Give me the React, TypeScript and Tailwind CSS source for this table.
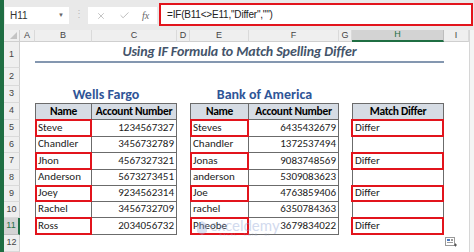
import { X, Check } from "lucide-react";

const COL = ["col-start-1", "col-start-2", "col-start-3", "col-start-4", "col-start-5", "col-start-6", "col-start-7", "col-start-8", "col-start-9", "col-start-10"];
const ROW = ["row-start-1", "row-start-2", "row-start-3", "row-start-4", "row-start-5", "row-start-6", "row-start-7", "row-start-8", "row-start-9", "row-start-10", "row-start-11", "row-start-12", "row-start-13"];

const wells = [
  ["Steve", "1234567327"],
  ["Chandler", "3456732789"],
  ["Jhon", "4567327321"],
  ["Anderson", "5673273451"],
  ["Joey", "9234562314"],
  ["Rachel", "3456732709"],
  ["Ross", "2034056732"],
];

const bank = [
  ["Steves", "6435432679"],
  ["Chandler", "1372537494"],
  ["Jonas", "9083748569"],
  ["anderson", "5309083623"],
  ["Joe", "4763859406"],
  ["rachel", "6350784363"],
  ["Pheobe", "3679834022"],
];

const match = ["Differ", "", "Differ", "", "Differ", "", "Differ"];

const cols = ["A", "B", "C", "D", "E", "F", "G", "H", "I"];

const cellFont = "font-['Carlito','Lato',sans-serif]";
const headCell = "bg-[#d6dce4] flex items-center justify-center whitespace-nowrap font-bold text-[11.5px] tracking-[-0.3px] text-black";

function RedBox() {
  return <div className="absolute -left-[1px] -top-[1px] -right-[1px] -bottom-[1px] border-2 border-[#e2141c] pointer-events-none" />;
}

function NameTable({ data, col }: { data: string[][]; col: number }) {
  return (
    <>
      <div className={`${COL[col]} ${ROW[4]} border border-[#6b6b6b] ${headCell} ${cellFont}`}>
        Name
      </div>
      <div className={`${COL[col + 1]} ${ROW[4]} border-y border-r border-[#6b6b6b] ${headCell} ${cellFont}`}>
        Account Number
      </div>
      {data.map((r, i) => (
        <div key={i} className="contents">
          <div className={`${COL[col]} ${ROW[5 + i]} relative border-x border-b border-[#6b6b6b] flex items-center pl-[2px] text-[11px] text-[#222] ${cellFont}`}>
            {r[0]}
            {i % 2 === 0 && <RedBox />}
          </div>
          <div className={`${COL[col + 1]} ${ROW[5 + i]} border-r border-b border-[#6b6b6b] flex items-center justify-end pr-[2px] text-[11px] text-[#222] ${cellFont}`}>
            {r[1]}
          </div>
        </div>
      ))}
    </>
  );
}

export default function App() {
  return (
    <div className="w-[474px] h-[252px] overflow-hidden flex bg-[#e9e9e9]">
      <div className="w-[4px] shrink-0 bg-[#1f6e43]" />
      <div className="flex-1 flex flex-col">
        {/* formula bar */}
        <div className="h-[30px] flex items-start bg-[#e9e9e9]">
          <div className="ml-[1px] mt-[7px] w-[64px] h-[17px] bg-white flex items-center pl-[5px] pr-[5px] justify-between text-[10px] text-[#333] font-['Liberation_Sans',sans-serif]">
            <span>H11</span>
            <span className="text-[6px] text-[#666]">▼</span>
          </div>
          <div className="w-[19px] mt-[8px] flex justify-center text-[10px] text-[#bbb] leading-none">⋮</div>
          <div className="mt-[7px] w-[69px] h-[17px] bg-white flex items-center text-[#9a9a9a]">
            <X size={10} strokeWidth={1.4} className="ml-[8px]" />
            <Check size={11} strokeWidth={1.4} className="ml-[13px]" />
            <span className="ml-[12px] italic text-[10px] font-['Liberation_Serif',serif] text-[#666]">fx</span>
          </div>
          <div className="ml-[2px] mt-[3px] w-[314px] h-[23px] bg-white border-2 border-[#e2141c] flex items-center pl-[6px] text-[10px] text-[#222] font-['Liberation_Sans',sans-serif] tracking-[-0.2px]">
            =IF(B11&lt;&gt;E11,"Differ","")
          </div>
        </div>

        {/* sheet */}
        <div className="flex flex-1">
          <div className="relative grid grid-cols-[16px_15px_57px_85px_13px_59px_90px_13px_92px_25px] grid-rows-[12px_26px_18px_17px_17px_17px_16px_17px_16px_16px_16px_17px_17px] bg-white">
            {/* corner */}
            <div className={`${COL[0]} ${ROW[0]} relative bg-[#efefef] border-r border-b border-[#cfcfcf]`}>
              <div className="absolute right-[2px] bottom-[2px] w-0 h-0 border-l-[7px] border-l-transparent border-b-[7px] border-b-[#c4c4c4]" />
            </div>
            {cols.map((c, i) => (
              <div
                key={c}
                className={`${COL[i + 1]} ${ROW[0]} flex items-center justify-center text-[9px] font-['Liberation_Sans',sans-serif] ${
                  c === "H"
                    ? "bg-[#d3d3d3] text-[#1f6e43] border-b-2 border-b-[#1f6e43] border-r border-r-[#bdbdbd]"
                    : "bg-[#efefef] text-[#444] border-b border-b-[#cfcfcf] border-r border-r-[#dadada]"
                }`}
              >
                {c}
              </div>
            ))}
            {Array.from({ length: 12 }, (_, i) => (
              <div
                key={i}
                className={`${COL[0]} ${ROW[i + 1]} flex items-center justify-center text-[9px] font-['Liberation_Sans',sans-serif] ${
                  i === 10
                    ? "bg-[#d3d3d3] text-[#1f6e43] border-r-2 border-r-[#1f6e43] border-b border-b-[#bdbdbd]"
                    : "bg-[#efefef] text-[#444] border-r border-r-[#cfcfcf] border-b border-b-[#dadada]"
                }`}
              >
                {i + 1}
              </div>
            ))}

            {/* title */}
            <div className={`col-start-3 col-end-10 ${ROW[1]} flex flex-col justify-end pb-[5px]`}>
              <div className="h-[20px] border-b-2 border-[#8497b0] flex items-center justify-center pb-[2px] text-[14px] tracking-[-0.1px] font-bold italic text-[#44546a] font-['Carlito','Lato',sans-serif]">
                Using IF Formula to Match Spelling Differ
              </div>
            </div>

            <div className={`col-start-3 col-end-5 ${ROW[3]} flex items-center justify-center text-[14px] font-bold text-[#2f5597] ${cellFont}`}>
              Wells Fargo
            </div>
            <div className={`col-start-6 col-end-8 ${ROW[3]} flex items-center justify-center text-[14px] font-bold text-[#2f5597] ${cellFont}`}>
              Bank of America
            </div>

            <NameTable data={wells} col={2} />
            <NameTable data={bank} col={5} />

            <div className={`${COL[8]} ${ROW[4]} border border-[#6b6b6b] ${headCell} ${cellFont}`}>
              Match Differ
            </div>
            {match.map((m, i) => (
              <div key={i} className={`${COL[8]} ${ROW[5 + i]} relative border-x border-b border-[#6b6b6b] flex items-center pl-[2px] text-[11px] text-[#222] ${cellFont}`}>
                {m}
                {m && <div className="absolute -left-[2px] -top-[1px] -right-[1px] -bottom-[1px] border-2 border-[#e2141c]" />}
              </div>
            ))}

            {/* watermark */}
            <div className="absolute left-[192px] top-[188px] flex items-center gap-[2px] opacity-40 pointer-events-none">
              <svg width="12" height="16" viewBox="0 0 12 16">
                <path d="M6 1 L11 4 L11 12 L6 15 L1 12 L1 4 Z" fill="#9fb2dc" />
              </svg>
              <div className="flex flex-col items-center leading-none">
                <span className="text-[15px] text-[#8fa4d6] font-['Lato',sans-serif]">exceldemy</span>
                <span className="text-[4px] tracking-[1px] text-[#9aaad0] font-['Liberation_Sans',sans-serif]">EXCEL · DATA · BI</span>
              </div>
            </div>

            {/* quick analysis */}
            <div className="absolute left-[441px] top-[207px]">
              <svg width="12" height="11" viewBox="0 0 12 11">
                <rect x="0.5" y="0.5" width="9" height="8" fill="#fff" stroke="#9a9a9a" />
                <rect x="2" y="2" width="3" height="2" fill="#4a78c2" />
                <rect x="6" y="2" width="2" height="2" fill="#9a9a9a" />
                <rect x="2" y="5" width="6" height="1" fill="#9a9a9a" />
                <path d="M9 8 h3 M10.5 6.5 v3" stroke="#555" strokeWidth="1" />
              </svg>
            </div>
          </div>
          <div className="flex-1 bg-[#f4f4f4] border-l border-[#d6d6d6]" />
        </div>
      </div>
    </div>
  );
}
